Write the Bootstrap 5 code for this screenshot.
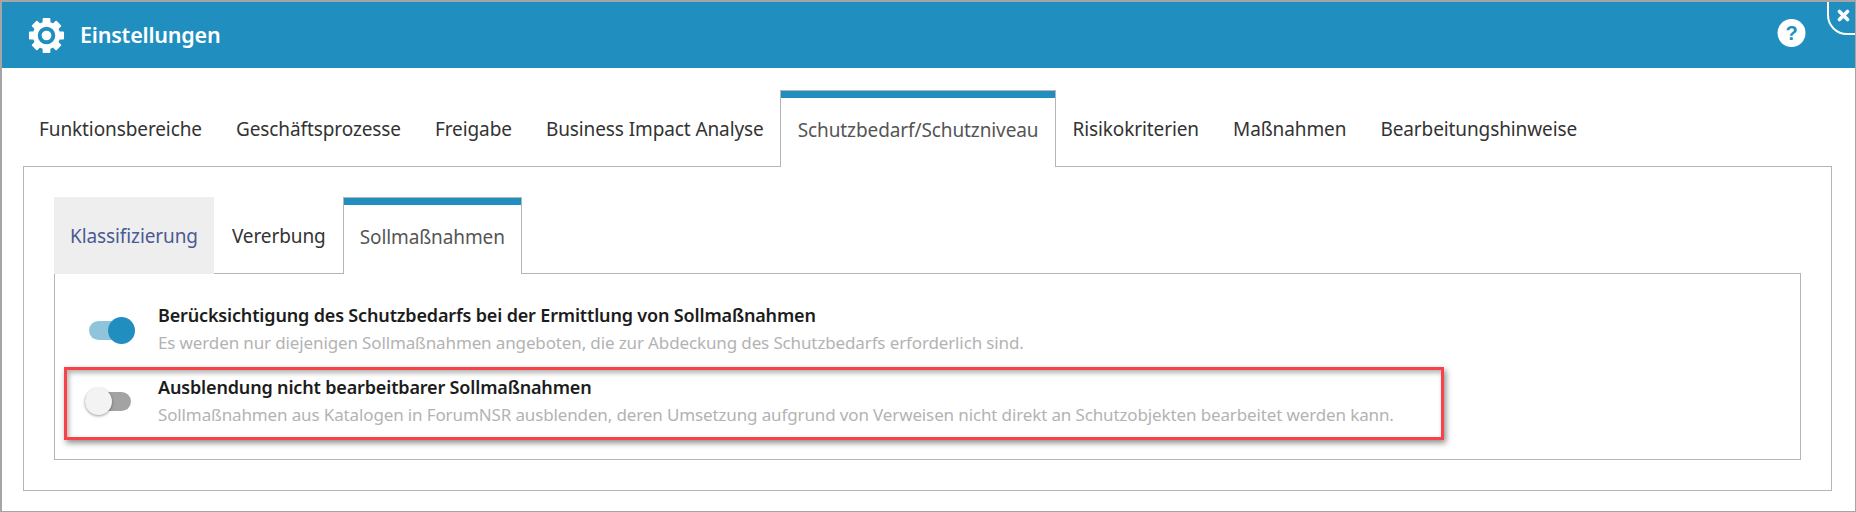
<!DOCTYPE html>
<html lang="de">
<head>
<meta charset="utf-8">
<title>Einstellungen</title>
<link href="https://cdn.jsdelivr.net/npm/bootstrap@5.3.0/dist/css/bootstrap.min.css" rel="stylesheet">
<style>
html,body{margin:0;height:512px;overflow:hidden;background:#fff}
body{font-family:"Noto Sans","Liberation Sans",sans-serif;color:#333}
.dlg-win{height:512px;border:1px solid #a5a5a5;border-top-width:2px;border-left-width:2px;position:relative;overflow:hidden}
.dlg-head{height:66px;background:#208fc0;color:#fff;padding:0 49px 0 26px}
.dlg-head .ms-auto{margin-bottom:5px}
.dlg-title{font-size:21.5px;font-weight:600;margin-left:15px;letter-spacing:-.2px}
.dlg-close{position:absolute;right:-22px;top:-22px;width:50px;height:55px;border:2px solid #fff;border-radius:20px}
.dlg-x{position:absolute;right:5px;top:7px;color:#fff}
.dlg-body{padding:22px 23px 0 21px}
.tab-strip{border:0;flex-wrap:nowrap;font-size:19px;letter-spacing:-.1px}
.strip-a{margin-left:-1px}
.tab-strip .nav-link{border:0;border-radius:0;color:#333;padding:2px 17px 0;display:flex;align-items:center;background:none;white-space:nowrap;margin:0}
.tab-strip .nav-link.active{color:#555;border:1px solid #b5b5b5;border-bottom:0;box-shadow:inset 0 7px 0 #208fc0;background:#fff;position:relative;margin-bottom:-1px;z-index:2;padding-top:3px}
.strip-a .nav-link{height:76px}
.strip-a .nav-link.active{height:77px;margin-left:-1px;margin-right:-1px}
.strip-b .nav-link{height:76px;padding-left:18px;padding-right:17px}
.strip-b .nav-link.active{height:77px;padding-left:16px;padding-right:16px}
.strip-b .nav-link.dim{background:#eee;color:#4a5a94;height:77px;margin-bottom:-1px;position:relative;z-index:1;padding-left:16px;padding-right:16px}
.pane-a{border:1px solid #b5b5b5;height:325px;padding:30px}
.pane-b{border:1px solid #b5b5b5;height:187px;padding:0 9px}
.opt-row{display:flex;align-items:flex-start}
.opt-head{font-size:18px;font-weight:600;color:#1c1c1c;letter-spacing:-.16px;line-height:24px}
.opt-desc{font-size:17px;color:#b3b3b3;letter-spacing:-.13px;line-height:24px;margin-top:4px}
.tgl-track{height:19px;border-radius:10px;display:flex;align-items:center;flex:none;margin-top:18px}
.tgl-knob{width:27px;height:27px;border-radius:50%;flex:none}
.tgl-on{width:42px;background:#90c4db;justify-content:flex-end;margin-left:25px;margin-right:27px}
.tgl-on .tgl-knob{background:#208fc0;margin-right:-4px}
.tgl-off{width:46px;background:#a3a3a3;margin-left:18px;margin-right:27px;margin-top:17px}
.tgl-off .tgl-knob{background:#f3f3f3;box-shadow:0 1px 3px rgba(0,0,0,.4)}
.opt-one{padding-top:29px}
.opt-two{margin-top:12px;width:1380px;height:73px;border:3px solid #f9414a;box-shadow:2px 3px 6px rgba(0,0,0,.45),inset 2px 3px 5px rgba(0,0,0,.3);padding-top:5px}
</style>
</head>
<body>
<div class="dlg-win">
  <div class="dlg-head d-flex align-items-center">
    <svg width="37" height="37" viewBox="0 0 38 38" aria-hidden="true"><g fill="#fff"><rect x="15" y="1" width="8" height="36" rx="1"/><rect x="15" y="1" width="8" height="36" rx="1" transform="rotate(45 19 19)"/><rect x="15" y="1" width="8" height="36" rx="1" transform="rotate(90 19 19)"/><rect x="15" y="1" width="8" height="36" rx="1" transform="rotate(135 19 19)"/><circle cx="19" cy="19" r="14"/></g><circle cx="19" cy="19" r="7" fill="none" stroke="#208fc0" stroke-width="4"/></svg>
    <div class="dlg-title">Einstellungen</div>
    <svg class="ms-auto" width="29" height="28" viewBox="0 0 29 28" aria-hidden="true"><circle cx="14.5" cy="14" r="14" fill="#fff"/><text x="14.5" y="21" text-anchor="middle" font-family="Liberation Sans, sans-serif" font-weight="700" font-size="20" fill="#208fc0">?</text></svg>
  </div>
  <div class="dlg-close"></div>
  <svg class="dlg-x" width="13" height="13" viewBox="0 0 13 13" aria-hidden="true"><path d="M2.5 2.5l8 8M10.5 2.5l-8 8" stroke="#fff" stroke-width="3.6" stroke-linecap="round"/></svg>
  <div class="dlg-body">
    <ul class="nav tab-strip strip-a">
      <li class="nav-item"><a class="nav-link" href="#">Funktionsbereiche</a></li>
      <li class="nav-item"><a class="nav-link" href="#">Geschäftsprozesse</a></li>
      <li class="nav-item"><a class="nav-link" href="#">Freigabe</a></li>
      <li class="nav-item"><a class="nav-link" href="#">Business Impact Analyse</a></li>
      <li class="nav-item"><a class="nav-link active" href="#">Schutzbedarf/Schutzniveau</a></li>
      <li class="nav-item"><a class="nav-link" href="#">Risikokriterien</a></li>
      <li class="nav-item"><a class="nav-link" href="#">Maßnahmen</a></li>
      <li class="nav-item"><a class="nav-link" href="#">Bearbeitungshinweise</a></li>
    </ul>
    <div class="pane-a">
      <ul class="nav tab-strip strip-b">
        <li class="nav-item"><a class="nav-link dim" href="#">Klassifizierung</a></li>
        <li class="nav-item"><a class="nav-link" href="#">Vererbung</a></li>
        <li class="nav-item"><a class="nav-link active" href="#">Sollmaßnahmen</a></li>
      </ul>
      <div class="pane-b">
        <div class="opt-row opt-one">
          <div class="tgl-track tgl-on"><div class="tgl-knob"></div></div>
          <div><div class="opt-head">Berücksichtigung des Schutzbedarfs bei der Ermittlung von Sollmaßnahmen</div><div class="opt-desc">Es werden nur diejenigen Sollmaßnahmen angeboten, die zur Abdeckung des Schutzbedarfs erforderlich sind.</div></div>
        </div>
        <div class="opt-row opt-two">
          <div class="tgl-track tgl-off"><div class="tgl-knob"></div></div>
          <div><div class="opt-head">Ausblendung nicht bearbeitbarer Sollmaßnahmen</div><div class="opt-desc">Sollmaßnahmen aus Katalogen in ForumNSR ausblenden, deren Umsetzung aufgrund von Verweisen nicht direkt an Schutzobjekten bearbeitet werden kann.</div></div>
        </div>
      </div>
    </div>
  </div>
</div>
<script src="https://cdn.jsdelivr.net/npm/bootstrap@5.3.0/dist/js/bootstrap.bundle.min.js"></script>
</body>
</html>
